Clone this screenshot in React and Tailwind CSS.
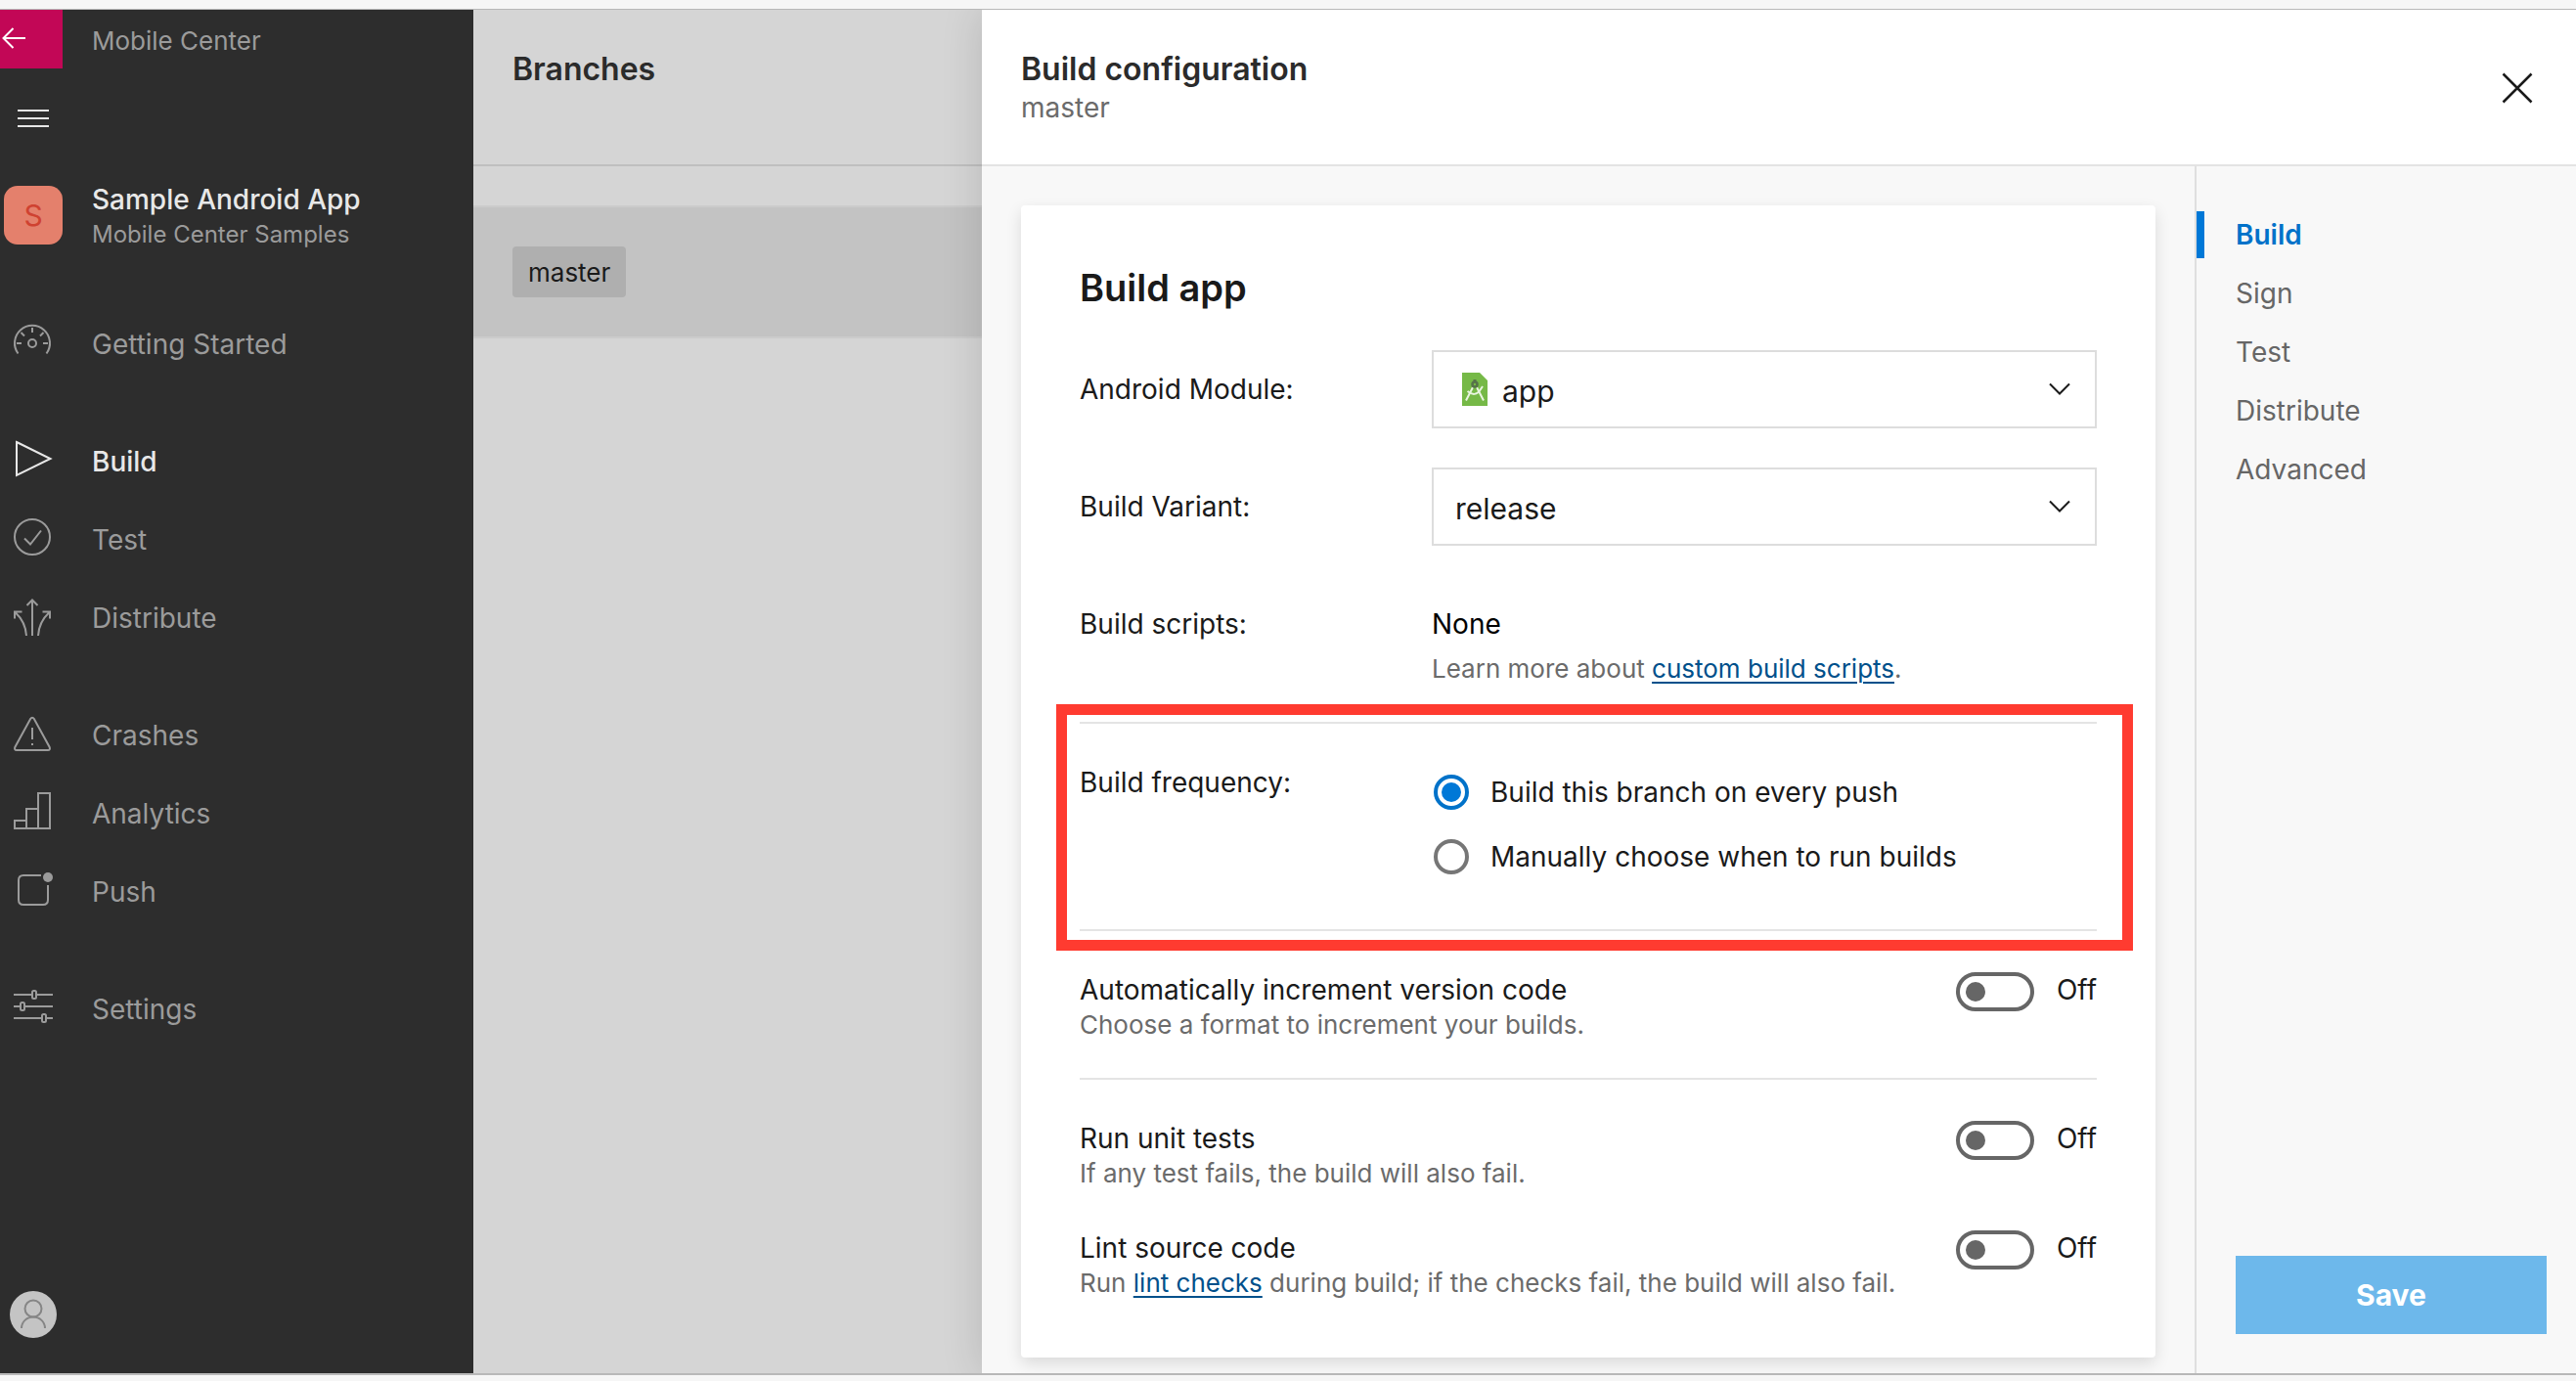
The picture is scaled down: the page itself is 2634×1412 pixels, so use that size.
import React from "react";

function Icon({ children }) {
  return (
    <svg
      viewBox="0 0 44 44"
      className="size-11 shrink-0"
      fill="none"
      stroke="currentColor"
      strokeWidth="2"
      aria-hidden="true"
    >
      {children}
    </svg>
  );
}

const icons = {
  gauge: (
    <Icon>
      <path d="M6.5 31.5A18 18 0 1 1 35.5 31.5" />
      <circle cx="21" cy="21" r="4" />
      <path d="M21 5v5M5 21h5M32 21h5M9.5 10l3.5 3.5M32.500 10l-3.500 3.500" />
    </Icon>
  ),
  play: (
    <Icon>
      <path d="M5 2L39.500 19L5 36Z" />
    </Icon>
  ),
  check: (
    <Icon>
      <circle cx="21" cy="19" r="18" />
      <path d="M13 20.500l6 6L30 12.500" />
    </Icon>
  ),
  branches: (
    <Icon>
      <path d="M21 40V3.500M15.500 9L21 3.500L26.500 9M3 22.500V15.500H10.500M3.500 16C10 22 14.500 31 15 40M39 22.500V15.500H31.500M38.500 16C32 22 27.500 31 27 40" />
    </Icon>
  ),
  warning: (
    <Icon>
      <path d="M19 5.200Q21 2.500 23 5.200L38.700 34Q39.600 37 37 37H5Q2.400 37 3.300 34Z" />
      <path d="M21 14v12M21 30v2" />
    </Icon>
  ),
  bars: (
    <Icon>
      <path d="M3 29H15V37H3ZM15 17H27V37H15ZM27 1H39V37H27Z" />
    </Icon>
  ),
  push: (
    <Icon>
      <path d="M30 5H12Q7 5 7 10V30Q7 35 12 35H32Q37 35 37 30V15" />
      <circle cx="37" cy="7" r="5" fill="currentColor" stroke="none" />
    </Icon>
  ),
  sliders: (
    <Icon>
      <path d="M2 7H20M26 7H42M2 19H8M14 19H42M2 31H30M36 31H42" />
      <rect x="21" y="3" width="4" height="8" rx="1.500" />
      <rect x="9" y="15" width="4" height="8" rx="1.500" />
      <rect x="31" y="27" width="4" height="8" rx="1.500" />
    </Icon>
  ),
};

const navGroups = [
  [{ label: "Getting Started", icon: "gauge" }],
  [
    { label: "Build", icon: "play", active: true },
    { label: "Test", icon: "check" },
    { label: "Distribute", icon: "branches" },
  ],
  [
    { label: "Crashes", icon: "warning" },
    { label: "Analytics", icon: "bars" },
    { label: "Push", icon: "push" },
  ],
  [{ label: "Settings", icon: "sliders" }],
];

function Sidebar() {
  return (
    <aside className="flex w-[484px] shrink-0 flex-col bg-[#2d2d2d] text-[#9b9b9b]">
      <div className="flex h-15 items-center">
        <button aria-label="Back" className="flex h-15 w-16 items-center bg-[#c20756] text-white">
          <svg viewBox="0 0 28 24" className="mb-0.5 h-6 w-7" fill="none" stroke="currentColor" strokeWidth="2" aria-hidden="true">
            <path d="M26 12H3M13.500 2L3.500 12L13.500 22" />
          </svg>
        </button>
        <span className="ml-[30px] pt-0.5 text-[26px]">Mobile Center</span>
      </div>
      <button aria-label="Menu" className="mt-[42px] ml-[18px] flex w-8 flex-col gap-1.5 text-[#e6e6e6]">
        <span className="h-0.5 w-full bg-current" />
        <span className="h-0.5 w-full bg-current" />
        <span className="h-0.5 w-full bg-current" />
      </button>
      <div className="mt-14 ml-1 flex items-center pb-0.5">
        <div className="mb-1 flex size-15 items-center justify-center rounded-[14px] bg-[#e4806c] text-[30px] text-[#cf4231]">
          S
        </div>
        <div className="ml-[30px]">
          <div className="text-[28px] leading-9 font-medium text-[#e8e8e8]">Sample Android App</div>
          <div className="text-[24px] leading-9">Mobile Center Samples</div>
        </div>
      </div>
      <nav className="mt-[52px] flex flex-col gap-10">
        {navGroups.map((group) => (
          <ul key={group[0].label}>
            {group.map((item) => (
              <li key={item.label}>
                <a
                  href={"#" + item.label}
                  className={
                    item.active
                      ? "flex h-20 items-center gap-[38px] pl-3 text-[28px] font-medium text-[#e8e8e8]"
                      : "flex h-20 items-center gap-[38px] pl-3 text-[28px]"
                  }
                >
                  {icons[item.icon]}
                  {item.label}
                </a>
              </li>
            ))}
          </ul>
        ))}
      </nav>
      <div className="mt-auto mb-9 ml-2.5 flex items-end">
        <svg viewBox="0 0 48 48" className="size-12" fill="none" stroke="#858585" strokeWidth="2" aria-label="Account">
          <circle cx="24" cy="24" r="24" fill="#c4c4c4" stroke="none" />
          <circle cx="24" cy="18" r="8.500" />
          <path d="M12 38A12 11.500 0 0 1 36 38" />
        </svg>
      </div>
    </aside>
  );
}

function Branches() {
  return (
    <section className="w-[520px] shrink-0 bg-[#d5d5d5]">
      <header className="h-40 border-b-2 border-[#bfbfbf] px-10 pt-10">
        <h1 className="text-[32px] leading-[42px] font-semibold text-[#2b2b2b]">Branches</h1>
      </header>
      <div className="mt-10 flex h-[136px] items-center border-y-2 border-[#cbcbcb] bg-[#c3c3c3] px-10">
        <span className="rounded bg-[#afafaf] px-4 pt-0.5 text-[26px] leading-[50px] text-[#1a1a1a]">master</span>
      </div>
    </section>
  );
}

function AndroidModuleIcon() {
  return (
    <svg viewBox="0 0 26 34" className="pointer-events-none absolute top-[23px] left-[31px] h-[34px] w-[26px]" aria-hidden="true">
      <path d="M0 0H18L26 8V34H0Z" fill="#76b947" />
      <g fill="none">
        <path d="M11 15L4 28.500M15 15L22 28.500" stroke="#e9f5e0" strokeWidth="2" />
        <path d="M5.500 19Q13 25 18 18.500L21 14" stroke="#e9f5e0" strokeWidth="2" />
        <circle cx="13" cy="12" r="2.500" stroke="#56724a" strokeWidth="2.500" />
        <path d="M13 7V10" stroke="#56724a" strokeWidth="3" />
      </g>
    </svg>
  );
}

function SelectRow({ id, label, value, icon }) {
  return (
    <div className="flex items-center">
      <label htmlFor={id} className="w-[360px] shrink-0 text-[28px]">
        {label}
      </label>
      <div className="relative flex-1">
        <select
          id={id}
          className={
            icon
              ? "block h-20 w-full appearance-none border-2 border-[#dddddd] bg-white pt-1 pl-[70px] text-[30px]"
              : "block h-20 w-full appearance-none border-2 border-[#dddddd] bg-white pt-1 pl-[22px] text-[30px]"
          }
        >
          <option>{value}</option>
        </select>
        {icon}
        <svg viewBox="0 0 24 14" className="pointer-events-none absolute top-[33px] right-[26px] h-3.5 w-6" fill="none" stroke="#1a1a1a" strokeWidth="2" aria-hidden="true">
          <path d="M2 1.500L12 11.500L22 1.500" />
        </svg>
      </div>
    </div>
  );
}

function RadioOption({ label, defaultChecked }) {
  return (
    <label className="flex h-9 items-center gap-[22px] pl-0.5 text-[28px]">
      <input
        type="radio"
        name="frequency"
        defaultChecked={defaultChecked}
        className="grid size-9 appearance-none place-content-center rounded-full border-4 border-[#767676] before:size-5 before:rounded-full checked:border-[#0072c9] checked:before:bg-[#0078d7]"
      />
      {label}
    </label>
  );
}

function ToggleRow({ id, title, children }) {
  return (
    <div className="flex items-start">
      <div className="flex-1 leading-9">
        <label htmlFor={id} className="block text-[28px]">
          {title}
        </label>
        <p className="text-[26px] text-[#6b6b6b]">{children}</p>
      </div>
      <input
        id={id}
        type="checkbox"
        role="switch"
        className="flex h-10 w-20 appearance-none items-center rounded-full border-4 border-[#666666] px-1.5 before:size-5 before:rounded-full before:bg-[#666666] checked:justify-end"
      />
      <span className="ml-5 w-11 text-right text-[28px] leading-9">Off</span>
    </div>
  );
}

function TextLink({ children }) {
  return (
    <a href="#docs" className="text-[#00508b] underline decoration-2 underline-offset-4">
      {children}
    </a>
  );
}

function BuildCard() {
  return (
    <div className="mt-10 mr-10 mb-4 ml-10 flex-1 rounded bg-white px-15 pt-15 pb-[58px] text-[#1a1a1a] shadow-[0_6px_16px_rgba(0,0,0,0.12)]">
      <h2 className="text-[38px] leading-12 font-semibold">Build app</h2>
      <div className="mt-10 flex flex-col gap-10">
        <SelectRow id="module" label="Android Module:" value="app" icon={<AndroidModuleIcon />} />
        <SelectRow id="variant" label="Build Variant:" value="release" />
      </div>
      <div className="mt-15 flex text-[28px] leading-10">
        <div className="w-[360px] shrink-0">Build scripts:</div>
        <div>
          <div className="text-black">None</div>
          <p className="mt-2 text-[26px] leading-9 text-[#6b6b6b]">
            Learn more about <TextLink>custom build scripts</TextLink>.
          </p>
        </div>
      </div>
      <fieldset className="relative mt-9 border-y-2 border-[#e4e4e4] pt-10 pb-14">
        <div className="flex">
          <div className="w-[360px] shrink-0 text-[28px] leading-10">Build frequency:</div>
          <div className="flex flex-col gap-[30px] pt-3">
            <RadioOption label="Build this branch on every push" defaultChecked />
            <RadioOption label="Manually choose when to run builds" />
          </div>
        </div>
        <div className="pointer-events-none absolute -top-5 -right-[37px] -bottom-[22px] -left-6 border-[11px] border-[#ff3b30]" />
      </fieldset>
      <div className="border-b-2 border-[#e4e4e4] pt-[42px] pb-9">
        <ToggleRow id="increment" title="Automatically increment version code">
          Choose a format to increment your builds.
        </ToggleRow>
      </div>
      <div className="flex flex-col gap-10 pt-[42px]">
        <ToggleRow id="unit-tests" title="Run unit tests">
          If any test fails, the build will also fail.
        </ToggleRow>
        <ToggleRow id="lint" title="Lint source code">
          Run <TextLink>lint checks</TextLink> during build; if the checks fail, the build will also fail.
        </ToggleRow>
      </div>
    </div>
  );
}

function StepNav() {
  return (
    <div className="flex w-[390px] shrink-0 flex-col border-l-2 border-[#dfdfdf] pt-10 pr-[30px] pb-10 text-[28px] text-[#666666]">
      <a href="#build" className="flex h-15 items-center gap-8 font-semibold text-[#0072c9]">
        <span className="h-12 w-2 bg-[#0078d7]" />
        Build
      </a>
      {["Sign", "Test", "Distribute", "Advanced"].map((step) => (
        <a key={step} href={"#" + step} className="flex h-15 items-center pl-10">
          {step}
        </a>
      ))}
      <button className="mt-auto ml-10 h-20 bg-[#6db8eb] text-[30px] font-bold text-white">Save</button>
    </div>
  );
}

export default function App() {
  return (
    <div className="flex min-h-screen flex-col bg-[#f6f6f6] pt-[9px] pb-1.5 font-['Inter',sans-serif]">
      <div className="flex flex-1 border-t border-b-2 border-[#b8b8b8]">
        <Sidebar />
        <Branches />
        <main className="z-10 flex min-w-0 flex-1 flex-col bg-[#f8f8f8] shadow-[0_0_40px_rgba(0,0,0,0.14)] [clip-path:inset(0_0_0_-40px)]">
          <header className="flex h-40 justify-between border-b-2 border-[#e3e3e3] bg-white pt-10 pr-10 pl-10">
            <div>
              <h1 className="text-[32px] leading-[42px] font-semibold text-[#2b2b2b]">Build configuration</h1>
              <p className="text-[28px] leading-9 text-[#6b6b6b]">master</p>
            </div>
            <button aria-label="Close" className="mt-5 flex size-10 items-center justify-center self-start">
              <svg viewBox="0 0 32 32" className="size-8" fill="none" stroke="#1a1a1a" strokeWidth="2.500" aria-hidden="true">
                <path d="M1.500 1.500L30.500 30.500M30.500 1.500L1.500 30.500" />
              </svg>
            </button>
          </header>
          <div className="flex flex-1">
            <BuildCard />
            <StepNav />
          </div>
        </main>
      </div>
    </div>
  );
}
